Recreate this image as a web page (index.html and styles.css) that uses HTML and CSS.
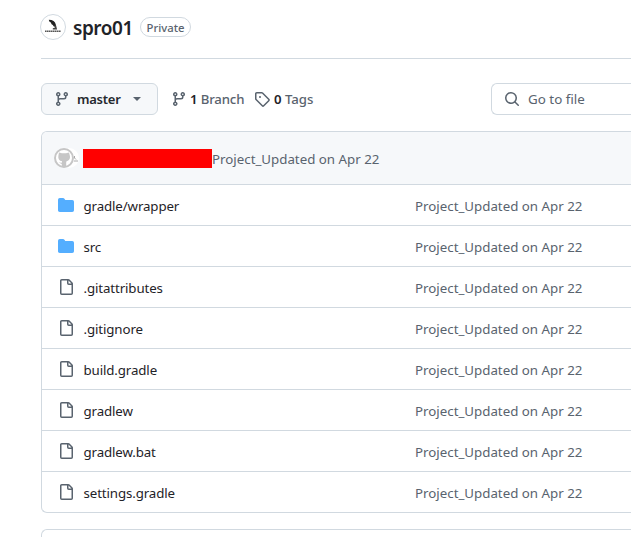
FILE: index.html
```
<!DOCTYPE html>
<html lang="en">
<head>
<meta charset="utf-8">
<title>spro01</title>
<link rel="stylesheet" href="styles.css">
</head>
<body>
<svg class="defs" aria-hidden="true">
  <symbol id="branch" viewBox="0 0 16 16"><path d="M9.5 3.25a2.25 2.25 0 1 1 3 2.122V6A2.5 2.5 0 0 1 10 8.500H6a1 1 0 0 0-1 1v1.128a2.251 2.251 0 1 1-1.500 0V5.372a2.250 2.250 0 1 1 1.500 0v1.836A2.493 2.493 0 0 1 6 7h4a1 1 0 0 0 1-1v-.628A2.250 2.250 0 0 1 9.500 3.250Zm-6 0a.75.75 0 1 0 1.500 0 .75.75 0 0 0-1.500 0Zm8.250-.75a.75.75 0 1 0 0 1.500.75.75 0 0 0 0-1.500ZM4.250 12a.75.75 0 1 0 0 1.500.75.75 0 0 0 0-1.500Z"/></symbol>
  <symbol id="file" viewBox="0 0 16 16"><path d="M2 1.750C2 .784 2.784 0 3.750 0h6.586c.464 0 .909.184 1.237.513l2.914 2.914c.329.328.513.773.513 1.237v9.586A1.750 1.750 0 0 1 13.250 16h-9.500A1.750 1.750 0 0 1 2 14.250Zm1.750-.25a.25.25 0 0 0-.25.25v12.500c0 .138.112.25.25.25h9.500a.25.25 0 0 0 .25-.25V6h-2.750A1.750 1.750 0 0 1 9 4.250V1.500Zm6.750.062V4.250c0 .138.112.25.25.25h2.688l-.011-.013-2.914-2.914-.013-.011Z"/></symbol>
  <symbol id="folder" viewBox="0 0 16 16"><path d="M1.750 1A1.750 1.750 0 0 0 0 2.750v10.500C0 14.216.784 15 1.750 15h12.500A1.750 1.750 0 0 0 16 13.250v-8.500A1.750 1.750 0 0 0 14.250 3H7.500a.25.25 0 0 1-.2-.1l-.9-1.200C6.070 1.260 5.550 1 5 1H1.750Z"/></symbol>
</svg>
<header class="repo-header">
  <svg class="avatar" viewBox="0 0 26 26"><circle cx="13" cy="13" r="12.500" fill="#fff" stroke="#d1d9e0"/><path d="M8.800 5.800c4 0 6.400 1.700 7 4.700l.3 2.300-2.300-.3-1-1.500-1.200-.7-.8-1.900-1.500-1Z" fill="#222"/><path d="m14.500 11.500 1.600 0 1 4h-4.300v-1.300l2-.4Z" fill="#444"/><path d="M5 17.300h16" stroke="#555" stroke-width="1.500" stroke-dasharray="1.600 .4"/></svg>
  <h1 class="repo-name">spro01</h1>
  <span class="label">Private</span>
</header>
<div class="toolbar">
  <button class="branch-button"><svg class="icon"><use href="#branch"/></svg><span class="branch-name">master</span><svg class="caret" viewBox="0 0 8 4"><path d="M0 0h8L4 4Z"/></svg></button>
  <div class="stat branches"><svg class="icon"><use href="#branch"/></svg><span class="stat-text"><b>1</b> Branch</span></div>
  <div class="stat tags"><svg class="icon" viewBox="0 0 16 16"><path d="M1 7.775V2.750C1 1.784 1.784 1 2.750 1h5.025c.464 0 .91.184 1.238.513l6.250 6.250a1.750 1.750 0 0 1 0 2.474l-5.026 5.026a1.750 1.750 0 0 1-2.474 0l-6.250-6.250A1.752 1.752 0 0 1 1 7.775Zm1.500 0c0 .066.026.13.073.177l6.250 6.250a.25.25 0 0 0 .354 0l5.025-5.025a.25.25 0 0 0 0-.354l-6.250-6.250a.25.25 0 0 0-.177-.073H2.750a.25.25 0 0 0-.25.25ZM6 5a1 1 0 1 1 0 2 1 1 0 0 1 0-2Z"/></svg><span class="stat-text"><b>0</b> Tags</span></div>
  <div class="search"><svg class="icon" viewBox="0 0 16 16"><path d="M10.680 11.740a6 6 0 0 1-7.922-8.982 6 6 0 0 1 8.982 7.922l3.040 3.040a.749.749 0 1 1-1.060 1.060ZM11.500 7a4.499 4.499 0 1 0-8.997 0A4.499 4.499 0 0 0 11.500 7Z"/></svg><span class="search-text">Go to file</span></div>
</div>
<main class="files">
  <div class="commit">
    <svg class="commit-avatar" viewBox="0 0 26 20"><circle cx="15" cy="10" r="10" fill="#fff"/><path d="M20.500 8v2l1.500 1.500M20 13h4" stroke="#aaa" fill="none"/><circle cx="10" cy="10" r="9" fill="#fff" stroke="#c6c6c6" stroke-width="2"/><path d="M5 4.500 8 5.200h4l3-.7.800 3c.8 3-.7 5.300-3.300 5.700l-.3 1.300V18H7.800v-2l-3.300-1.500 3.300.2.300-1.500C5.200 12.900 3.800 11 4.400 7.500Z" fill="#c6c6c6"/></svg>
    <span class="redacted"></span>
    <span class="message">Project_Updated on Apr 22</span>
  </div>
  <div class="row"><svg class="icon folder"><use href="#folder"/></svg><span class="name">gradle/wrapper</span><span class="message">Project_Updated on Apr 22</span></div>
  <div class="row"><svg class="icon folder"><use href="#folder"/></svg><span class="name">src</span><span class="message">Project_Updated on Apr 22</span></div>
  <div class="row"><svg class="icon"><use href="#file"/></svg><span class="name">.gitattributes</span><span class="message">Project_Updated on Apr 22</span></div>
  <div class="row"><svg class="icon"><use href="#file"/></svg><span class="name">.gitignore</span><span class="message">Project_Updated on Apr 22</span></div>
  <div class="row"><svg class="icon"><use href="#file"/></svg><span class="name">build.gradle</span><span class="message">Project_Updated on Apr 22</span></div>
  <div class="row"><svg class="icon"><use href="#file"/></svg><span class="name">gradlew</span><span class="message">Project_Updated on Apr 22</span></div>
  <div class="row"><svg class="icon"><use href="#file"/></svg><span class="name">gradlew.bat</span><span class="message">Project_Updated on Apr 22</span></div>
  <div class="row"><svg class="icon"><use href="#file"/></svg><span class="name">settings.gradle</span><span class="message">Project_Updated on Apr 22</span></div>
</main>
<section class="readme"></section>
</body>
</html>
```
FILE: styles.css
```
* { box-sizing: border-box; }
body { margin: 0; padding-left: 41px; background: #fff; color: #1f2328; font: 13.3px/20px "Noto Sans", sans-serif; }
.defs { position: absolute; width: 0; height: 0; }
.icon { width: 16px; height: 16px; flex: none; fill: #59636e; }
.repo-header { display: flex; align-items: center; height: 59px; padding-bottom: 4px; border-bottom: 1px solid #d1d9e0; }
.avatar { width: 26px; height: 26px; margin-left: -1px; }
.repo-name { margin: 2px 0 0 7px; width: 60px; font-size: 19px; font-weight: 600; line-height: 28px; letter-spacing: -0.45px; white-space: nowrap; }
.label { width: 51px; height: 20px; margin-left: 7px; border: 1px solid #d1d9e0; border-radius: 10px; color: #59636e; font-size: 11.300px; font-weight: 500; line-height: 19px; text-align: center; }
.toolbar { display: flex; align-items: center; height: 32px; margin-top: 24px; color: #59636e; }
.branch-button { display: flex; flex: none; align-items: center; width: 117px; height: 32px; padding: 0 0 0 12px; border: 1px solid #d1d9e0; border-radius: 6px; background: #f6f8fa; color: #25292e; font: 600 13px/20px "Noto Sans", sans-serif; letter-spacing: -0.25px; }
.branch-name { width: 44px; margin-left: 7px; text-align: left; }
.caret { width: 8px; height: 4px; margin-left: 12px; fill: #59636e; }
.stat { display: flex; flex: none; align-items: center; white-space: nowrap; font-size: 13.200px; font-weight: 500; }
.stat b { color: #1f2328; font-weight: 600; }
.branches { width: 83px; margin-left: 13px; gap: 3px; letter-spacing: -0.15px; }
.tags { width: 66px; gap: 4px; }
.search { display: flex; align-items: center; flex: 1; height: 32px; margin-left: 171px; padding-left: 12px; border: 1px solid #d1d9e0; border-right: 0; border-radius: 6px 0 0 6px; }
.search-text { margin-left: 8px; font-size: 13.400px; }
.files { margin-top: 16px; border: 1px solid #d1d9e0; border-right: 0; border-radius: 6px 0 0 6px; overflow: hidden; }
.commit { display: flex; align-items: center; height: 52px; padding-left: 12px; background: #f6f8fa; }
.commit-avatar { width: 26px; height: 20px; }
.redacted { width: 129px; height: 19px; margin-left: 3px; background: #f00; }
.message { padding-top: 2px; color: #59636e; white-space: nowrap; }
.row { display: flex; align-items: center; height: 41px; padding-left: 16px; border-top: 1px solid #d1d9e0; }
.folder { fill: #54aeff; }
.name { width: 331.500px; margin-left: 9.500px; padding-top: 2px; letter-spacing: -0.12px; }
.readme { height: 8px; margin-top: 16px; border: 1px solid #d1d9e0; border-right: 0; border-bottom: 0; border-radius: 6px 0 0 0; }
```
